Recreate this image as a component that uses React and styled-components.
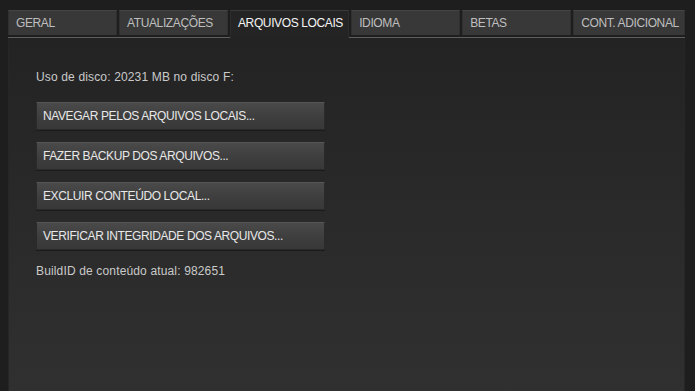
import React from "react";
import styled, { createGlobalStyle } from "styled-components";

const Global = createGlobalStyle`
  html, body { margin: 0; padding: 0; background: #1d1d1e; }
  body { font-family: Arial, "Liberation Sans", sans-serif; }
  #root { width: 695px; height: 391px; overflow: hidden; }
`;

const Window = styled.div`
  width: 695px;
  height: 391px;
  background: #1e1e1f;
  display: flex;
  flex-direction: column;
  padding: 10px 10px 0 8px;
  box-sizing: border-box;
`;

const TabBar = styled.div`
  display: flex;
  align-items: flex-start;
  gap: 2px;
  height: 28px;
  border-bottom: 1px solid #5e5e5e;
  box-sizing: border-box;
`;

const Tab = styled.div`
  min-width: 109px;
  height: ${(p) => (p.$active ? "28px" : "25px")};
  box-sizing: border-box;
  padding: 0 6px 0 7px;
  padding-bottom: ${(p) => (p.$active ? "3px" : "0")};
  display: flex;
  align-items: center;
  font-size: 12px;
  letter-spacing: -0.38px;
  color: ${(p) => (p.$active ? "#f4f4f4" : "#bfbfbf")};
  background: ${(p) => (p.$active ? "#242425" : "#383838")};
  border: 1px solid ${(p) => (p.$active ? "#2c2c2c" : "#303030")};
  border-top-color: ${(p) => (p.$active ? "#3a3a3a" : "#444")};
  border-bottom: none;
  white-space: nowrap;
  position: relative;
  z-index: ${(p) => (p.$active ? 1 : 0)};
`;

const Panel = styled.div`
  flex: 1;
  background: linear-gradient(#232324, #2b2b2b 60%, #303030);
  display: flex;
  flex-direction: column;
  padding: 30px 0 0 27px;
  box-sizing: border-box;
  border-left: 1px solid #262626;
  border-right: 1px solid #262626;
`;

const Label = styled.div`
  font-size: 12px;
  color: #cacaca;
  height: 18px;
  line-height: 18px;
  letter-spacing: 0.15px;
`;

const Buttons = styled.div`
  display: flex;
  flex-direction: column;
  gap: 12px;
  margin: 16px 0 12px;
`;

const Button = styled.div`
  width: 289px;
  height: 28px;
  box-sizing: border-box;
  padding: 0 6px;
  display: flex;
  align-items: center;
  font-size: 12px;
  letter-spacing: -0.4px;
  color: #e8e8e8;
  background: linear-gradient(#4a4a4a, #3f3f3f 50%, #383838);
  border: 1px solid #2a2a2a;
  border-top-color: #555;
  box-shadow: 0 1px 0 #1b1b1b;
`;

const tabs = [
  "GERAL",
  "ATUALIZAÇÕES",
  "ARQUIVOS LOCAIS",
  "IDIOMA",
  "BETAS",
  "CONT. ADICIONAL",
];

const actions = [
  "NAVEGAR PELOS ARQUIVOS LOCAIS...",
  "FAZER BACKUP DOS ARQUIVOS...",
  "EXCLUIR CONTEÚDO LOCAL...",
  "VERIFICAR INTEGRIDADE DOS ARQUIVOS...",
];

export default function App() {
  return (
    <>
      <Global />
      <Window>
        <TabBar>
          {tabs.map((t) => (
            <Tab key={t} $active={t === "ARQUIVOS LOCAIS"}>
              {t}
            </Tab>
          ))}
        </TabBar>
        <Panel>
          <Label>Uso de disco: 20231 MB no disco F:</Label>
          <Buttons>
            {actions.map((a) => (
              <Button key={a}>{a}</Button>
            ))}
          </Buttons>
          <Label>BuildID de conteúdo atual: 982651</Label>
        </Panel>
      </Window>
    </>
  );
}
